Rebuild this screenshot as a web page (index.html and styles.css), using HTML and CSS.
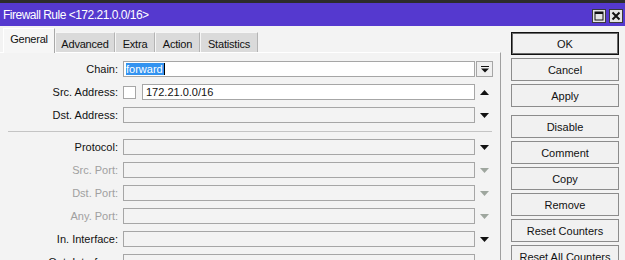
FILE: index.html
```html
<!DOCTYPE html>
<html>
<head>
<meta charset="utf-8">
<link rel="stylesheet" href="styles.css">
</head>
<body>
<div class="window">
  <div class="titlebar">
    <span class="title">Firewall Rule &lt;172.21.0.0/16&gt;</span>
    <div class="wbtns">
      <span class="wbtn"><svg width="12" height="12" viewBox="0 0 12 12"><rect x="2" y="2" width="8" height="8" fill="none" stroke="#111" stroke-width="1"/><rect x="2" y="2" width="8" height="2" fill="#111"/></svg></span>
      <span class="wbtn"><svg width="12" height="12" viewBox="0 0 12 12"><path d="M2.5 2.5 L9.5 9.5 M9.5 2.5 L2.5 9.5" stroke="#111" stroke-width="2"/></svg></span>
    </div>
  </div>
  <div class="main">
    <div class="left">
      <div class="tabs">
        <span class="tab active t-gen">General</span>
        <span class="tab t-adv">Advanced</span>
        <span class="tab t-ext">Extra</span>
        <span class="tab t-act">Action</span>
        <span class="tab t-sta">Statistics</span>
      </div>
      <div class="panel">
        <div class="row">
          <span class="label">Chain:</span>
          <span class="field white"><span class="sel">forward</span></span>
          <span class="arrow"><span class="ddbtn"><svg width="8" height="7" viewBox="0 0 8 7"><rect x="0" y="0" width="8" height="1" fill="#111"/><polygon points="0,2.5 8,2.5 4,6.5" fill="#111"/></svg></span></span>
        </div>
        <div class="row">
          <span class="label">Src. Address:</span>
          <span class="check"></span>
          <span class="field white short">172.21.0.0/16</span>
          <span class="arrow"><svg width="9" height="5" viewBox="0 0 9 5"><polygon points="0,5 9,5 4.5,0" fill="#111"/></svg></span>
        </div>
        <div class="row">
          <span class="label">Dst. Address:</span>
          <span class="field"></span>
          <span class="arrow"><svg width="9" height="5" viewBox="0 0 9 5"><polygon points="0,0 9,0 4.5,5" fill="#111"/></svg></span>
        </div>
        <div class="sep"></div>
        <div class="row">
          <span class="label">Protocol:</span>
          <span class="field"></span>
          <span class="arrow"><svg width="9" height="5" viewBox="0 0 9 5"><polygon points="0,0 9,0 4.5,5" fill="#111"/></svg></span>
        </div>
        <div class="row">
          <span class="label dis">Src. Port:</span>
          <span class="field"></span>
          <span class="arrow"><svg width="9" height="5" viewBox="0 0 9 5"><polygon points="0,0 9,0 4.5,5" fill="#9ea69e"/></svg></span>
        </div>
        <div class="row">
          <span class="label dis">Dst. Port:</span>
          <span class="field"></span>
          <span class="arrow"><svg width="9" height="5" viewBox="0 0 9 5"><polygon points="0,0 9,0 4.5,5" fill="#9ea69e"/></svg></span>
        </div>
        <div class="row">
          <span class="label dis">Any. Port:</span>
          <span class="field"></span>
          <span class="arrow"><svg width="9" height="5" viewBox="0 0 9 5"><polygon points="0,0 9,0 4.5,5" fill="#9ea69e"/></svg></span>
        </div>
        <div class="row">
          <span class="label">In. Interface:</span>
          <span class="field"></span>
          <span class="arrow"><svg width="9" height="5" viewBox="0 0 9 5"><polygon points="0,0 9,0 4.5,5" fill="#111"/></svg></span>
        </div>
        <div class="row">
          <span class="label">Out. Interface:</span>
          <span class="field"></span>
          <span class="arrow"><svg width="9" height="5" viewBox="0 0 9 5"><polygon points="0,0 9,0 4.5,5" fill="#111"/></svg></span>
        </div>
      </div>
    </div>
    <div class="buttons">
      <span class="btn default">OK</span>
      <span class="btn">Cancel</span>
      <span class="btn">Apply</span>
      <span class="btn gap">Disable</span>
      <span class="btn">Comment</span>
      <span class="btn">Copy</span>
      <span class="btn">Remove</span>
      <span class="btn">Reset Counters</span>
      <span class="btn">Reset All Counters</span>
    </div>
  </div>
</div>
</body>
</html>
```
FILE: styles.css
```css
html, body {
  margin: 0;
  padding: 0;
}
body {
  font-family: "Liberation Sans", Arial, sans-serif;
  font-size: 11px;
  color: #111;
  background: #f3f3f3;
}
.window {
  width: 625px;
  height: 260px;
  overflow: hidden;
  background: #f3f3f3;
}
.titlebar {
  height: 23px;
  border-top: 3px solid #2c2c2c;
  background: #5539cf;
  display: flex;
  align-items: center;
  justify-content: space-between;
}
.title {
  color: #fff;
  font-size: 12px;
  letter-spacing: -0.5px;
  padding-left: 3px;
  padding-top: 1px;
}
.wbtns {
  display: flex;
  gap: 3px;
  padding-right: 2px;
  padding-top: 3px;
}
.wbtn {
  width: 12px;
  height: 12px;
  border: 1px solid #3a3a3a;
  background: #e4e4e4;
  display: flex;
}
.main {
  display: flex;
}
.left {
  width: 501px;
}
.tabs {
  height: 26px;
  display: flex;
  align-items: flex-end;
  padding-left: 3px;
}
.tab {
  box-sizing: border-box;
  height: 20px;
  display: flex;
  align-items: center;
  justify-content: center;
  background: #dadada;
  border-top: 1px solid #f6f6f6;
  border-left: 1px solid #f6f6f6;
  border-right: 1px solid #b4b4b4;
  padding-top: 2px;
  letter-spacing: -0.2px;
  white-space: nowrap;
}
.t-gen { width: 52px; }
.t-adv { width: 60px; }
.t-ext { width: 40px; }
.t-act { width: 45px; }
.t-sta { width: 58px; }
.tab.active {
  height: 25px;
  margin-bottom: -1px;
  background: #f6f6f6;
  border-top: 1px solid #fff;
  border-left: 1px solid #fff;
  border-right: 1px solid #a8a8a8;
  padding: 0 0 4px 0;
  position: relative;
  z-index: 1;
}
.panel {
  border-top: 1px solid #fff;
  border-right: 1px solid #a0a0a0;
  padding-top: 8px;
  height: 220px;
  display: flex;
  flex-direction: column;
  gap: 7px;
}
.row {
  height: 16px;
  display: flex;
  align-items: center;
  flex-shrink: 0;
}
.label {
  width: 118px;
  text-align: right;
  margin-right: 5px;
  white-space: nowrap;
}
.label.dis {
  color: #a0a0a0;
}
.field {
  width: 352px;
  height: 16px;
  box-sizing: border-box;
  border: 1px solid #a6a6a6;
  background: #f3f3f3;
  display: flex;
  align-items: center;
  padding-left: 3px;
}
.field.white {
  background: #fff;
}
.field.short {
  width: 333px;
  margin-left: 6px;
}
.sel {
  background: #3393f0;
  color: #fff;
  line-height: 12px;
  padding: 0 1px 0 0;
  margin-left: -1px;
  border-right: 1px solid #000;
}
.check {
  width: 13px;
  height: 13px;
  box-sizing: border-box;
  border: 1px solid #a6a6a6;
  background: #fff;
}
.arrow {
  width: 17px;
  margin-left: 1px;
  height: 16px;
  display: flex;
  align-items: center;
  justify-content: center;
}
.ddbtn {
  width: 17px;
  height: 16px;
  box-sizing: border-box;
  border: 1px solid #a6a6a6;
  background: #f0f0f0;
  display: flex;
  align-items: center;
  justify-content: center;
}
.sep {
  height: 1px;
  margin: 1px 0 0 8px;
  width: 484px;
  background: #c4c4c4;
  flex-shrink: 0;
}
.buttons {
  margin-left: 10px;
  width: 108px;
  padding-top: 6px;
  display: flex;
  flex-direction: column;
  gap: 3px;
}
.btn {
  height: 23px;
  box-sizing: border-box;
  border: 1px solid #8c8c8c;
  background: #f1f1f1;
  display: flex;
  align-items: center;
  justify-content: center;
  flex-shrink: 0;
  white-space: nowrap;
}
.btn.default {
  border: 1px solid #111;
  box-shadow: inset 0 0 0 1px #6a6a6a;
}
.btn.gap {
  margin-top: 5px;
}
```
